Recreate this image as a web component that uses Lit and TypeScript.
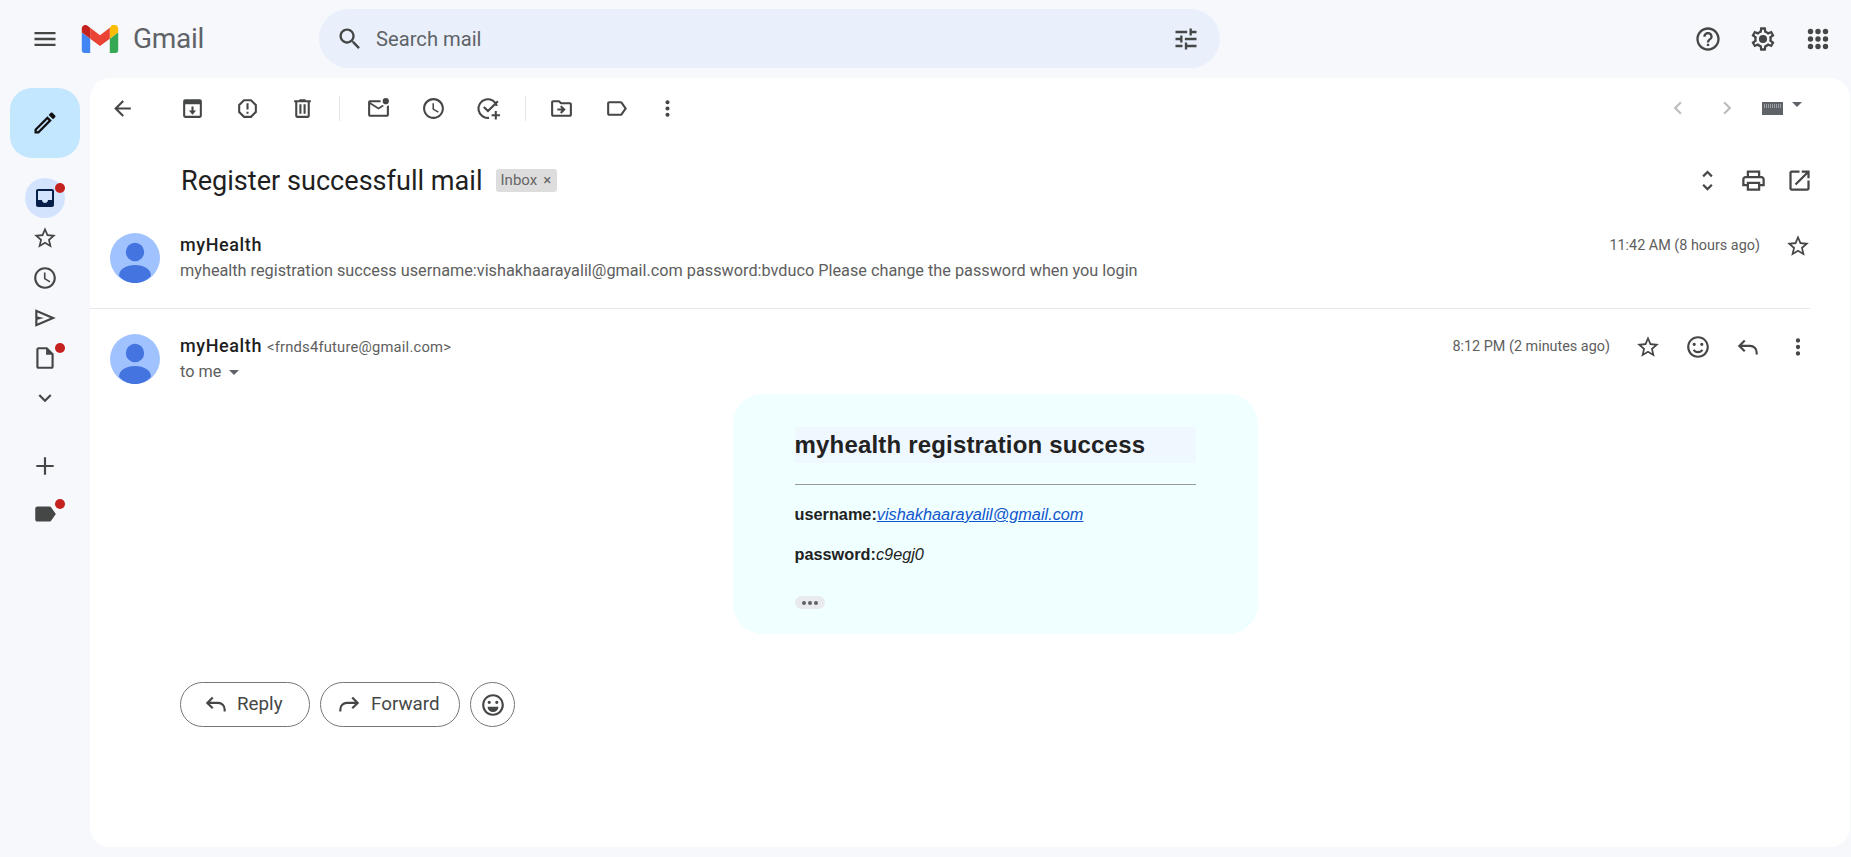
import { LitElement, html, css } from 'lit';
import { customElement } from 'lit/decorators.js';

const P = {
  menu: 'M3 18h18v-2H3v2zm0-5h18v-2H3v2zm0-7v2h18V6H3z',
  search: 'M15.5 14h-.79l-.28-.27C15.41 12.59 16 11.11 16 9.5 16 5.91 13.09 3 9.5 3S3 5.91 3 9.5 5.91 16 9.5 16c1.61 0 3.09-.59 4.23-1.57l.27.28v.79l5 4.99L20.49 19l-4.99-5zm-6 0C7.01 14 5 11.99 5 9.5S7.01 5 9.5 5 14 7.01 14 9.5 11.99 14 9.5 14z',
  tune: 'M3 17v2h6v-2H3zM3 5v2h10V5H3zm10 16v-2h8v-2h-8v-2h-2v6h2zM7 9v2H3v2h4v2h2V9H7zm14 4v-2H11v2h10zm-6-4h2V7h4V5h-4V3h-2v6z',
  help: 'M11 18h2v-2h-2v2zm1-16C6.48 2 2 6.48 2 12s4.48 10 10 10 10-4.48 10-10S17.52 2 12 2zm0 18c-4.41 0-8-3.59-8-8s3.59-8 8-8 8 3.59 8 8-3.59 8-8 8zm0-14c-2.21 0-4 1.79-4 4h2c0-1.1.9-2 2-2s2 .9 2 2c0 2-3 1.75-3 5h2c0-2.25 3-2.5 3-5 0-2.21-1.79-4-4-4z',
  gear: 'M19.43 12.98c.04-.32.07-.64.07-.98 0-.34-.03-.66-.07-.98l2.11-1.65c.19-.15.24-.42.12-.64l-2-3.46c-.09-.16-.26-.25-.44-.25-.06 0-.12.01-.17.03l-2.49 1c-.52-.4-1.08-.73-1.69-.98l-.38-2.65C14.46 2.18 14.25 2 14 2h-4c-.25 0-.46.18-.49.42l-.38 2.65c-.61.25-1.17.59-1.69.98l-2.49-1c-.06-.02-.12-.03-.18-.03-.17 0-.34.09-.43.25l-2 3.46c-.13.22-.07.49.12.64l2.11 1.65c-.04.32-.07.65-.07.98 0 .33.03.66.07.98l-2.11 1.65c-.19.15-.24.42-.12.64l2 3.46c.09.16.26.25.44.25.06 0 .12-.01.17-.03l2.49-1c.52.4 1.08.73 1.69.98l.38 2.65c.03.24.24.42.49.42h4c.25 0 .46-.18.49-.42l.38-2.65c.61-.25 1.17-.59 1.69-.98l2.49 1c.06.02.12.03.18.03.17 0 .34-.09.43-.25l2-3.46c.12-.22.07-.49-.12-.64l-2.11-1.65zm-1.98-1.71c.04.31.05.52.05.73 0 .21-.02.43-.05.73l-.14 1.13.89.7 1.08.84-.7 1.21-1.27-.51-1.04-.42-.9.68c-.43.32-.84.56-1.25.73l-1.06.43-.16 1.13-.2 1.35h-1.4l-.19-1.35-.16-1.13-1.06-.43c-.43-.18-.83-.41-1.23-.71l-.91-.7-1.06.43-1.27.51-.7-1.21 1.08-.84.89-.7-.14-1.13c-.03-.31-.05-.54-.05-.74s.02-.43.05-.73l.14-1.13-.89-.7-1.08-.84.7-1.21 1.27.51 1.04.42.9-.68c.43-.32.84-.56 1.25-.73l1.06-.43.16-1.13.2-1.35h1.39l.19 1.35.16 1.13 1.06.43c.43.18.83.41 1.23.71l.91.7 1.06-.43 1.27-.51.7 1.21-1.07.85-.89.7.14 1.13zM12 8.5a3.5 3.5 0 1 0 0 7 3.5 3.5 0 0 0 0-7z',
  back: 'M20 11H7.83l5.59-5.59L12 4l-8 8 8 8 1.41-1.41L7.83 13H20v-2z',
  spam: 'M15.73 3H8.27L3 8.27v7.46L8.27 21h7.46L21 15.73V8.27L15.73 3zM19 14.9L14.9 19H9.1L5 14.9V9.1L9.1 5h5.8L19 9.1v5.8zM11 15h2v2h-2zM11 7h2v6h-2z',
  trash: 'M15 4V3H9v1H4v2h1v13c0 1.1.9 2 2 2h10c1.1 0 2-.9 2-2V6h1V4h-5zm2 15H7V6h10v13zM9 8h2v9H9zm4 0h2v9h-2z',
  unread: 'M22 8.98V18c0 1.1-.9 2-2 2H4c-1.1 0-2-.9-2-2V6c0-1.1.9-2 2-2h10.1c-.06.32-.1.66-.1 1 0 .34.04.68.1 1H4l8 5 3.67-2.29c.47.43 1.02.76 1.63.98L12 13 4 8v10h16V9.9c.74-.15 1.42-.48 2-.92zM16 5a3 3 0 1 0 6 0 3 3 0 0 0-6 0z',
  clock: 'M11.99 2C6.47 2 2 6.48 2 12s4.47 10 9.99 10C17.52 22 22 17.52 22 12S17.52 2 11.99 2zM12 20c-4.42 0-8-3.58-8-8s3.58-8 8-8 8 3.58 8 8-3.58 8-8 8zm.5-13H11v6l5.25 3.15.75-1.23-4.5-2.67z',
  folder: 'M20 6h-8l-2-2H4c-1.1 0-2 .9-2 2v12c0 1.1.9 2 2 2h16c1.1 0 2-.9 2-2V8c0-1.1-.9-2-2-2zm0 12H4V6h5.17l2 2H20v10zm-8.01-9l-1.41 1.41L12.16 12H8v2h4.16l-1.59 1.59L11.99 17 16 13.01 11.99 9z',
  label: 'M17.63 5.84C17.27 5.33 16.67 5 16 5L5 5.01C3.9 5.01 3 5.9 3 7v10c0 1.1.9 1.99 2 1.99L16 19c.67 0 1.27-.33 1.63-.84L22 12l-4.37-6.16zM16 17H5V7h11l3.55 5L16 17z',
  labelFill: 'M17.63 5.84C17.27 5.33 16.67 5 16 5L5 5.01C3.9 5.01 3 5.9 3 7v10c0 1.1.9 1.99 2 1.99L16 19c.67 0 1.27-.33 1.63-.84L22 12l-4.37-6.16z',
  kebab: 'M12 8a2 2 0 1 0 0-4 2 2 0 0 0 0 4zm0 2a2 2 0 1 0 0 4 2 2 0 0 0 0-4zm0 6a2 2 0 1 0 0 4 2 2 0 0 0 0-4z',
  prev: 'M15.41 7.41L14 6l-6 6 6 6 1.41-1.41L10.83 12z',
  next: 'M10 6L8.59 7.41 13.17 12l-4.58 4.59L10 18l6-6z',
  unfold: 'M12 5.83L15.17 9l1.41-1.41L12 3 7.41 7.59 8.83 9 12 5.83zm0 12.34L8.83 15l-1.41 1.41L12 21l4.59-4.59L15.17 15 12 18.17z',
  print: 'M19 8h-1V3H6v5H5c-1.66 0-3 1.34-3 3v6h4v4h12v-4h4v-6c0-1.66-1.34-3-3-3zM8 5h8v3H8V5zm8 12v2H8v-4h8v2zm2-2v-2H6v2H4v-4c0-.55.45-1 1-1h14c.55 0 1 .45 1 1v4h-2z',
  open: 'M19 19H5V5h7V3H5c-1.11 0-2 .9-2 2v14c0 1.1.89 2 2 2h14c1.1 0 2-.9 2-2v-7h-2v7zM14 3v2h3.59l-9.83 9.83 1.41 1.41L19 6.41V10h2V3h-7z',
  star: 'M22 9.24l-7.19-.62L12 2 9.19 8.63 2 9.24l5.46 4.73L5.82 21 12 17.27 18.18 21l-1.63-7.03L22 9.24zM12 15.4l-3.76 2.27 1-4.28-3.32-2.88 4.38-.38L12 6.1l1.71 4.04 4.38.38-3.32 2.88 1 4.28L12 15.4z',
  smileRing: 'M11.99 2C6.47 2 2 6.48 2 12s4.47 10 9.99 10C17.52 22 22 17.52 22 12S17.52 2 11.99 2zM12 20c-4.42 0-8-3.58-8-8s3.58-8 8-8 8 3.58 8 8-3.58 8-8 8zM8.500 11a1.500 1.500 0 1 0 0-3 1.500 1.500 0 0 0 0 3zm7 0a1.500 1.500 0 1 0 0-3 1.500 1.500 0 0 0 0 3z',
  pencil: 'M3 17.25V21h3.75L17.81 9.94l-3.75-3.75L3 17.25zM5.92 19H5v-.92l9.06-9.06.92.92L5.92 19zM20.71 5.63l-2.34-2.34c-.2-.2-.45-.29-.71-.29s-.51.1-.7.29l-1.83 1.83 3.75 3.75 1.83-1.83c.39-.39.39-1.02 0-1.41z',
  send: 'M3 20V4l19 8-19 8zm2-3l11.85-5L5 7v3.5l6 1.5-6 1.5V17z',
  draft: 'M14 2H6c-1.1 0-1.99.9-1.99 2L4 20c0 1.1.89 2 1.99 2H18c1.1 0 2-.9 2-2V8l-6-6zM6 20V4h7v5h5v11H6z',
  chevron: 'M16.59 8.59L12 13.17 7.41 8.59 6 10l6 6 6-6z',
  plus: 'M20 13h-7v7h-2v-7H4v-2h7V4h2v7h7v2z',
  inbox: 'M19 3H5c-1.1 0-2 .9-2 2v14c0 1.1.9 2 2 2h14c1.1 0 2-.9 2-2V5c0-1.1-.9-2-2-2zm0 11h-4c0 1.66-1.34 3-3 3s-3-1.34-3-3H5V5h14v9z',
};

const icon = (d: string, cls = '') => html`<svg class=${cls} viewBox="0 0 24 24"><path d=${d}></path></svg>`;

const strokeIcon = (d: string, cls = '') =>
  html`<svg class="line ${cls}" viewBox="0 0 24 24"><path d=${d}></path></svg>`;

const REPLY = 'M9 6L4 11l5 5M4 11h10a6 6 0 0 1 6 6v2';
const FORWARD = 'M15 6l5 5-5 5M20 11H10a6 6 0 0 0-6 6v2';

const avatar = () => html`
  <svg class="avatar" viewBox="0 0 50 50">
    <circle cx="25" cy="25" r="25" fill="#a0c3ff"></circle>
    <circle cx="25" cy="19" r="9.2" fill="#4374e0"></circle>
    <path fill="#4374e0" d="M9 43c0-7 7-11 16-11s16 4 16 11c-4 4.500-10 7-16 7S13 47.500 9 43z"></path>
  </svg>
`;

@customElement('app-root')
export class AppRoot extends LitElement {
  static styles = css`
    :host {
      display: block;
      height: 857px;
      overflow: hidden;
      background: #f6f8fc;
      font-family: Roboto, 'Liberation Sans', sans-serif;
      color: #1f1f1f;
    }
    svg {
      display: block;
      width: 28px;
      height: 28px;
      fill: #444746;
      flex: none;
    }
    svg.line {
      fill: none;
      stroke: #444746;
      stroke-width: 2;
    }
    .topbar {
      display: flex;
      align-items: center;
      height: 78px;
      padding: 0 19px 1px 31px;
      box-sizing: border-box;
    }
    .logo {
      display: flex;
      align-items: center;
      margin-left: 22px;
      width: 238px;
      gap: 14px;
    }
    .logo svg {
      width: 38px;
      height: 28px;
    }
    .logo span {
      font-size: 28px;
      color: #5f6368;
      letter-spacing: -0.3px;
    }
    .search {
      display: flex;
      align-items: center;
      width: 901px;
      height: 59px;
      border-radius: 30px;
      background: #e9f0fb;
      padding: 0 20px 0 17px;
      box-sizing: border-box;
      gap: 12px;
    }
    .search span {
      flex: 1;
      font-size: 20.2px;
      color: #5f6368;
    }
    .top-actions {
      display: flex;
      margin-left: auto;
      gap: 27px;
    }
    .layout {
      display: flex;
      height: 769px;
    }
    .rail {
      width: 90px;
      flex: none;
      padding-top: 10px;
      box-sizing: border-box;
    }
    .compose {
      display: flex;
      align-items: center;
      justify-content: center;
      width: 70px;
      height: 70px;
      margin: 0 0 20px 10px;
      border-radius: 22px;
      background: #c2e7ff;
    }
    .compose svg {
      fill: #111;
    }
    .rail-item {
      position: relative;
      display: flex;
      align-items: center;
      justify-content: center;
      width: 40px;
      height: 40px;
      margin-left: 25px;
      border-radius: 20px;
    }
    .rail-item svg {
      width: 26px;
      height: 26px;
    }
    .rail-item.active {
      background: #d3e3fd;
    }
    .rail-item.active svg {
      fill: #041e49;
      width: 24px;
      height: 24px;
    }
    .rail-item.spaced {
      margin-top: 28px;
    }
    .rail-item.label-item {
      margin-top: 8px;
    }
    .dot {
      position: absolute;
      top: 5px;
      right: 0;
      width: 10px;
      height: 10px;
      border-radius: 50%;
      background: #c5221f;
    }
    .main {
      flex: 1;
      margin-right: 1px;
      background: #fff;
      border-radius: 20px;
      display: flex;
      flex-direction: column;
    }
    .toolbar {
      display: flex;
      align-items: center;
      height: 60px;
      padding-left: 5px;
    }
    .tool {
      display: flex;
      align-items: center;
      justify-content: center;
      width: 55px;
      flex: none;
    }
    .tool svg {
      width: 25px;
      height: 25px;
    }
    .tool.back {
      margin-right: 15px;
    }
    .tool.more {
      margin-left: -4px;
    }
    .sep {
      width: 1px;
      height: 25px;
      background: #e3e5e8;
      margin: 0 11px 0 9px;
    }
    .sep.second {
      margin-right: 8px;
    }
    .pager {
      display: flex;
      align-items: center;
      margin-left: auto;
      padding-right: 48px;
    }
    .pager svg.off {
      fill: #bdbdbd;
      width: 26px;
      height: 26px;
    }
    .pager .gap {
      margin-left: 23px;
    }
    .kbd {
      width: 21px;
      height: 13px;
      margin-left: 22px;
      background: #5f6368;
      border: 2px solid #5f6368;
      box-sizing: border-box;
      background-image: repeating-linear-gradient(90deg, #9aa0a6 0 1px, #5f6368 1px 2px);
      background-size: 100% 4px;
      background-repeat: no-repeat;
    }
    .caret {
      width: 0;
      height: 0;
      border-left: 5px solid transparent;
      border-right: 5px solid transparent;
      border-top: 5px solid #5f6368;
    }
    .kbd + .caret {
      margin: -8px 0 0 9px;
    }
    .subject {
      display: flex;
      align-items: center;
      height: 84px;
      padding: 0 37px 0 91px;
    }
    .subject h2 {
      margin: 2px 0 0;
      font-size: 27.1px;
      font-weight: 400;
      color: #1f1f1f;
    }
    .chip {
      display: flex;
      align-items: center;
      gap: 6px;
      height: 23px;
      margin-left: 13px;
      padding: 0 6px 0 5px;
      border-radius: 3px;
      background: #dddddd;
      color: #666;
      font-size: 15px;
    }
    .subject-actions {
      display: flex;
      align-items: center;
      margin-left: auto;
      gap: 19px;
    }
    .subject-actions svg {
      width: 27px;
      height: 27px;
    }
    .message {
      display: flex;
      padding: 25px 39px 25px 20px;
    }
    .message.first {
      margin-right: 40px;
      padding-top: 11px;
      padding-right: 0;
      border-bottom: 1px solid #e6e8eb;
    }
    .avatar {
      width: 50px;
      height: 50px;
      margin-right: 20px;
    }
    .who {
      flex: 1;
      font-size: 16.26px;
      color: #5e5e5e;
    }
    .who .line1 {
      height: 24px;
      line-height: 24px;
      margin-bottom: 2px;
      white-space: nowrap;
    }
    .who .line2 {
      display: flex;
      align-items: center;
      height: 24px;
      line-height: 24px;
      gap: 8px;
      white-space: nowrap;
    }
    .who b {
      font-size: 18px;
      font-weight: 500;
      letter-spacing: 0.6px;
      color: #1f1f1f;
    }
    .who small {
      font-size: 14.75px;
      margin-left: 1px;
      letter-spacing: 0.2px;
    }
    .when {
      display: flex;
      align-items: flex-start;
      font-size: 14.4px;
      line-height: 26px;
      color: #5e5e5e;
      white-space: nowrap;
    }
    .when svg {
      width: 26px;
      height: 26px;
    }
    .when .a1 {
      margin-left: 25px;
    }
    .when .a2 {
      margin-left: 24px;
    }
    .when .a3 {
      margin-left: 24px;
    }
    .first .when svg {
      margin-right: -1px;
    }
    .smile {
      fill: none;
      stroke: #444746;
      stroke-width: 2;
    }
    .body {
      padding-left: 90px;
      padding-right: 40px;
    }
    .mail-wrap {
      display: flex;
      justify-content: center;
      margin-top: -15px;
    }
    .mail {
      width: 525px;
      box-sizing: border-box;
      padding: 33px 62px 25px;
      border-radius: 30px;
      background: #f0ffff;
      font-family: 'Liberation Sans', Arial, sans-serif;
      font-size: 16.3px;
      color: #222;
    }
    .mail h1 {
      margin: 0;
      height: 36px;
      line-height: 36px;
      background: #f0f8ff;
      font-size: 24px;
      font-weight: 700;
      letter-spacing: 0.18px;
    }
    .mail hr {
      margin: 21px 0 19px;
      height: 1px;
      border: 0;
      background: #999;
    }
    .mail p {
      margin: 0 0 20px;
      line-height: 20px;
    }
    .mail a {
      color: #1155cc;
      font-style: italic;
    }
    .mail em {
      font-style: italic;
    }
    .trim {
      display: flex;
      align-items: center;
      justify-content: center;
      gap: 2px;
      width: 30px;
      height: 13px;
      margin-top: 32px;
      border-radius: 7px;
      background: #e8eaed;
    }
    .trim i {
      width: 4px;
      height: 4px;
      border-radius: 50%;
      background: #5f6368;
    }
    .actions {
      display: flex;
      gap: 10px;
      margin-top: 48px;
    }
    .btn {
      display: flex;
      align-items: center;
      height: 45px;
      box-sizing: border-box;
      border: 1px solid #747775;
      border-radius: 23px;
      font-size: 18.8px;
      color: #444746;
    }
    .btn.reply {
      width: 130px;
      padding: 0 0 1px 22px;
      gap: 8px;
    }
    .btn.forward {
      width: 140px;
      padding: 0 0 1px 15px;
      gap: 9px;
    }
    .btn.emoji {
      width: 45px;
      justify-content: center;
    }
    .btn svg {
      width: 26px;
      height: 26px;
    }
  `;

  private tool(d: string, cls = '') {
    return html`<div class="tool ${cls}">${icon(d)}</div>`;
  }

  private railItem(d: string, cls = '', dot = false) {
    return html`<div class="rail-item ${cls}">${icon(d)}${dot ? html`<span class="dot"></span>` : ''}</div>`;
  }

  render() {
    return html`
      <header class="topbar">
        ${icon(P.menu)}
        <div class="logo">
          <svg viewBox="0 0 52 40">
            <path fill="#4285f4" d="M3.500 40H12V19.500L0 10.500v26A3.500 3.500 0 0 0 3.500 40z"></path>
            <path fill="#34a853" d="M40 40h8.500a3.500 3.500 0 0 0 3.500-3.500v-26L40 19.500z"></path>
            <path fill="#fbbc04" d="M40 4v15.500l12-9v-5c0-5-5.700-7.800-9.600-4.800z"></path>
            <path fill="#ea4335" d="M12 19.500V4l14 10.500L40 4v15.500L26 30z"></path>
            <path fill="#c5221f" d="M0 5.500v5l12 9V4L8.600 1.300C4.700-1.700 0 .5 0 5.500z"></path>
          </svg>
          <span>Gmail</span>
        </div>
        <div class="search">
          ${icon(P.search)}
          <span>Search mail</span>
          ${icon(P.tune)}
        </div>
        <div class="top-actions">
          ${icon(P.help)} ${icon(P.gear)}
          <svg viewBox="0 0 28 28">
            <circle cx="6.500" cy="6.500" r="2.700"></circle><circle cx="14" cy="6.500" r="2.700"></circle><circle cx="21.500" cy="6.500" r="2.700"></circle>
            <circle cx="6.500" cy="14" r="2.700"></circle><circle cx="14" cy="14" r="2.700"></circle><circle cx="21.500" cy="14" r="2.700"></circle>
            <circle cx="6.500" cy="21.500" r="2.700"></circle><circle cx="14" cy="21.500" r="2.700"></circle><circle cx="21.500" cy="21.500" r="2.700"></circle>
          </svg>
        </div>
      </header>
      <div class="layout">
        <nav class="rail">
          <div class="compose">${icon(P.pencil)}</div>
          ${this.railItem(P.inbox, 'active', true)}
          ${this.railItem(P.star)}
          ${this.railItem(P.clock)}
          ${this.railItem(P.send)}
          ${this.railItem(P.draft, '', true)}
          ${this.railItem(P.chevron)}
          ${this.railItem(P.plus, 'spaced')}
          ${this.railItem(P.labelFill, 'label-item', true)}
        </nav>
        <main class="main">
          <div class="toolbar">
            ${this.tool(P.back, 'back')}
            <div class="tool">
              <svg viewBox="0 0 24 24">
                <path d="M5 3h14a2 2 0 0 1 2 2v14a2 2 0 0 1-2 2H5a2 2 0 0 1-2-2V5a2 2 0 0 1 2-2zm0 5v11h14V8H5zm6 2h2v4h2.500L12 18l-3.500-4H11v-4z"></path>
              </svg>
            </div>
            ${this.tool(P.spam)} ${this.tool(P.trash)}
            <div class="sep"></div>
            ${this.tool(P.unread)} ${this.tool(P.clock)}
            <div class="tool">
              <svg class="line" viewBox="0 0 24 24">
                <path d="M20 9.500A9 9 0 1 0 12.500 21M7.500 10.500l4 4L21 5M19 14.500v8M15 18.500h8"></path>
              </svg>
            </div>
            <div class="sep second"></div>
            ${this.tool(P.folder)} ${this.tool(P.label)} ${this.tool(P.kebab, 'more')}
            <div class="pager">
              ${icon(P.prev, 'off')} ${icon(P.next, 'off gap')}
              <div class="kbd"></div>
              <div class="caret"></div>
            </div>
          </div>

          <div class="subject">
            <h2>Register successfull mail</h2>
            <div class="chip">Inbox <span>×</span></div>
            <div class="subject-actions">${icon(P.unfold)} ${icon(P.print)} ${icon(P.open)}</div>
          </div>

          <section class="message first">
            ${avatar()}
            <div class="who">
              <div class="line1"><b>myHealth</b></div>
              <div class="line2">myhealth registration success username:vishakhaarayalil@gmail.com password:bvduco Please change the password when you login</div>
            </div>
            <div class="when">
              11:42 AM (8 hours ago)
              <span class="a1">${icon(P.star)}</span>
            </div>
          </section>

          <section class="message">
            ${avatar()}
            <div class="who">
              <div class="line1"><b>myHealth</b> <small>&lt;frnds4future@gmail.com&gt;</small></div>
              <div class="line2">to me <span class="caret"></span></div>
            </div>
            <div class="when">
              8:12 PM (2 minutes ago)
              <span class="a1">${icon(P.star)}</span>
              <span class="a2">
                <svg viewBox="0 0 24 24"><path d=${P.smileRing}></path><path class="smile" d="M8 14.500c.8 1.400 2.300 2.300 4 2.300s3.200-.9 4-2.300"></path></svg>
              </span>
              <span class="a3">${strokeIcon(REPLY)}</span>
              <span class="a3">${icon(P.kebab)}</span>
            </div>
          </section>

          <div class="body">
            <div class="mail-wrap">
              <div class="mail">
                <h1>myhealth registration success</h1>
                <hr />
                <p><b>username:</b><a href="#">vishakhaarayalil@gmail.com</a></p>
                <p><b>password:</b><em>c9egj0</em></p>
                <div class="trim"><i></i><i></i><i></i></div>
              </div>
            </div>
            <div class="actions">
              <div class="btn reply">${strokeIcon(REPLY)} Reply</div>
              <div class="btn forward">${strokeIcon(FORWARD)} Forward</div>
              <div class="btn emoji">
                <svg viewBox="0 0 24 24"><path d=${P.smileRing}></path><path d="M7 13.500h10a5 5 0 0 1-10 0z"></path></svg>
              </div>
            </div>
          </div>
        </main>
      </div>
    `;
  }
}
